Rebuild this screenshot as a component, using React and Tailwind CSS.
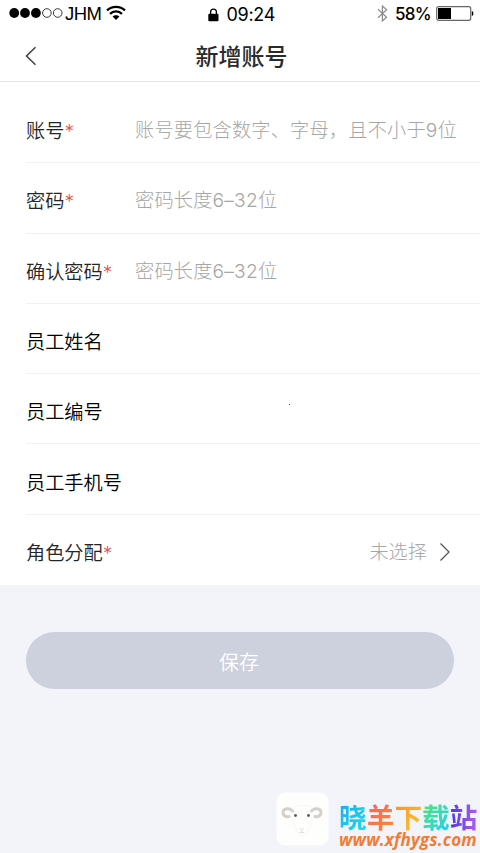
import React from "react";

const FIELDS = [
  { label: "账号", required: true, placeholder: "账号要包含数字、字母，且不小于9位" },
  { label: "密码", required: true, placeholder: "密码长度6–32位" },
  { label: "确认密码", required: true, placeholder: "密码长度6–32位" },
  { label: "员工姓名" },
  { label: "员工编号", dot: true },
  { label: "员工手机号" },
];

const StatusBar = () => (
  <div className="flex h-[27px] items-center justify-between pl-[9px] pr-[6px] text-black font-['Inter','Liberation_Sans',sans-serif]">
    <div className="flex w-[150px] items-center pb-px">
      <svg width="54" height="12" viewBox="0 0 54 12">
        <circle cx="5.2" cy="6" r="4.9" />
        <circle cx="16" cy="6" r="4.9" />
        <circle cx="26.9" cy="6" r="4.9" />
        <circle cx="37.9" cy="6" r="4.3" fill="none" stroke="#222" strokeWidth="0.9" />
        <circle cx="48.7" cy="6" r="4.3" fill="none" stroke="#222" strokeWidth="0.9" />
      </svg>
      <span className="ml-[2px] w-[38px] text-[18.5px] leading-none tracking-[-0.6px] pt-[3px] font-['Liberation_Sans',sans-serif]">
        JHM
      </span>
      <svg className="ml-[3px]" width="20" height="16" viewBox="0 0 20 16" fill="none" stroke="#000" strokeWidth="2.3">
        <path d="M1 5.4C6 .6 14 .6 19 5.4" />
        <path d="M4 8.8c3.4-3.2 8.6-3.2 12 0" />
        <path d="M10 15l-3.4-3.5c1.9-1.8 4.9-1.8 6.8 0z" fill="#000" stroke="none" />
      </svg>
    </div>

    <div className="flex items-center pt-[2px]">
      <svg width="11" height="14" viewBox="0 0 11 14">
        <path d="M2.6 6V4a2.9 2.9 0 0 1 5.8 0v2" fill="none" stroke="#000" strokeWidth="1.3" />
        <rect x="0.3" y="5.8" width="10.2" height="7.4" rx="1" />
      </svg>
      <span className="ml-[8px] w-[49px] text-[18px] leading-none tracking-[-0.3px]">09:24</span>
    </div>

    <div className="flex w-[150px] items-center justify-end">
      <svg width="11" height="17" viewBox="0 0 11 17" fill="none" stroke="#8c8c8c" strokeWidth="1.2">
        <path d="M1 4.3l8.6 8-4.2 3.7V1l4.2 3.7L1 12.7" />
      </svg>
      <span className="ml-[7px] w-[37px] whitespace-nowrap pt-px text-[17px] font-medium leading-none tracking-[-0.7px]">
        58%
      </span>
      <svg className="ml-[4px]" width="38" height="15" viewBox="0 0 38 15">
        <rect x="0.7" y="0.7" width="34" height="13.6" rx="2" fill="#fff" stroke="#666" strokeWidth="1.2" />
        <rect x="2" y="2" width="13" height="11" />
        <path d="M35.8 5c2.2.4 2.2 4.600 0 5z" />
      </svg>
    </div>
  </div>
);

const Label = ({ text, required }) => (
  <div className={required ? "font-[350] text-[#252525]" : "font-[350] text-black"}>
    {text}
    {required && <span className="text-[#ee4a50]">*</span>}
  </div>
);

const SheepLogo = () => (
  <svg width="53" height="54" viewBox="0 0 53 54">
    <rect x="0.5" y="0.5" width="52" height="53" rx="9" fill="#fefefc" />
    <path d="M16.500 19c-2.500-3.500-9-3-9.500 1-.3 3 2.500 5.500 6 4.500" fill="none" stroke="#d3d0cc" strokeWidth="3" strokeLinecap="round" />
    <path d="M35.500 19c2.500-3.500 9-3 9.500 1 .3 3-2.500 5.500-6 4.500" fill="none" stroke="#d3d0cc" strokeWidth="3" strokeLinecap="round" />
    <path d="M15 17c5-5 17-5 22 0M17 27c1 8 4 15 9 17 5-2 9-8 10-17" fill="none" stroke="#f5f4f2" strokeWidth="0.8" />
    <circle cx="19.500" cy="23.500" r="1.400" fill="#555963" />
    <circle cx="32.500" cy="23.500" r="1.400" fill="#555963" />
    <path d="M23.500 36l2.200 2 2.300-2M25.700 38v2.500M23.500 40.500h4.500" fill="none" stroke="#d8d4d0" strokeWidth="0.8" />
  </svg>
);

const App = () => {
  return (
    <div className="flex h-[853px] w-[480px] flex-col overflow-hidden bg-[#f3f4f9] font-['Noto_Sans_CJK_SC',sans-serif]">
      <div className="bg-white">
        <StatusBar />

        {/* Title bar */}
        <div className="grid h-[55px] grid-cols-[60px_1fr_60px] items-center border-b border-[#e4e4e4]">
          <button className="flex pl-[25px] pt-[3px]">
            <svg width="12" height="20" viewBox="0 0 12 20" fill="none" stroke="#444" strokeWidth="1.6">
              <path d="M10.500 1.200L1.500 10l9 8.800" />
            </svg>
          </button>
          <h1 className="pl-[3px] pt-[3px] text-center text-[23px] font-medium leading-none text-[#2b2b2b]">
            新增账号
          </h1>
        </div>

        {/* Form */}
        <div className="pl-[26px] pt-[11px] text-[19.2px] leading-none font-['Inter','Noto_Sans_CJK_SC',sans-serif]">
          {FIELDS.map((field) => (
            <div
              key={field.label}
              className="grid h-[70.3px] grid-cols-[109px_1fr] items-center whitespace-nowrap border-b border-[#f1f1f1] pt-[8px]"
            >
              <Label text={field.label} required={field.required} />
              <div className="pb-[2px] font-light tracking-[0.2px] text-[#a6a6a6]">
                {field.placeholder}
                {field.dot && <div className="mb-[15px] ml-[154px] size-px bg-[#555]" />}
              </div>
            </div>
          ))}
          <div className="flex h-[70px] items-center justify-between pr-[29px] pt-[8px]">
            <Label text="角色分配" required />
            <div className="flex items-center gap-[12px] pb-[2px] font-light text-[#a6a6a6]">
              未选择
              <svg className="-mt-[2px]" width="12" height="20" viewBox="0 0 12 20" fill="none" stroke="#555" strokeWidth="1.3">
                <path d="M1.500 1.500L10 10l-8.500 8.500" />
              </svg>
            </div>
          </div>
        </div>
      </div>

      <div className="px-[26px] pt-[47px]">
        <button className="h-[57px] w-full rounded-full bg-[#cdd0dd] pr-[2px] pt-[4px] text-[20px] font-[350] leading-none text-white">
          保存
        </button>
      </div>

      {/* Site mark */}
      <div className="mt-auto flex items-end pl-[276px] pb-[7px]">
        <SheepLogo />
        <div className="ml-[10px] -mb-[3px] whitespace-nowrap">
          <div className="flex text-[27.7px] font-bold leading-[30px]">
            <span className="bg-linear-to-br from-[#1fa8f5] to-[#20dfe6] bg-clip-text text-transparent">晓</span>
            <span className="bg-linear-to-br from-[#f9605a] to-[#f98a26] bg-clip-text text-transparent">羊</span>
            <span className="bg-linear-to-br from-[#f98d2c] to-[#f5cb2a] bg-clip-text text-transparent">下</span>
            <span className="bg-linear-to-br from-[#55e35c] to-[#22cff0] bg-clip-text text-transparent">载</span>
            <span className="bg-linear-to-r from-[#4a35dc] to-[#b45cf5] bg-clip-text text-transparent">站</span>
          </div>
          <div className="text-[17px] font-bold italic leading-[18px] tracking-[0.2px] text-[#ef7d35] font-['Open_Sans',sans-serif]">
            www.xfhygs.com
          </div>
        </div>
      </div>
    </div>
  );
};

export default App;
